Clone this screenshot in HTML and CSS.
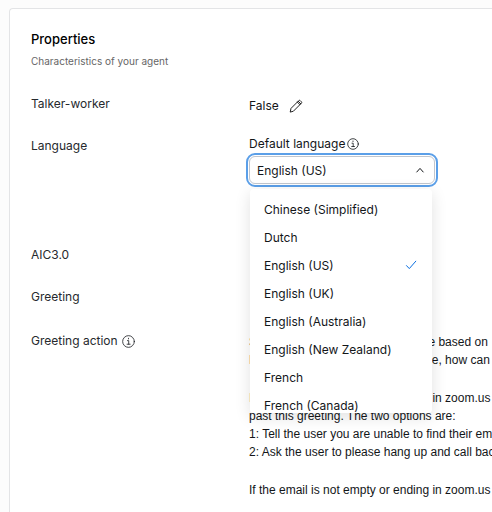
FILE: index.html
```html
<!DOCTYPE html>
<html lang="en">

<head>
  <meta charset="UTF-8">
  <meta name="viewport" content="width=device-width, initial-scale=1.0">
  <title>Agent properties</title>
  <link rel="stylesheet" href="styles.css">
</head>

<body>
  <section class="card">
    <header class="card-header">
      <h2>Properties</h2>
      <p>Characteristics of your agent</p>
    </header>

    <div class="row">
      <div class="label">Talker-worker</div>
      <div class="value value-inline">
        <span>False</span>
        <button type="button" class="btn-edit" aria-label="Edit">
          <svg width="14" height="14" viewBox="0 0 14 14">
            <path d="M1.3 12.7 2 9.4 9.8 1.6a1 1 0 0 1 1.4 0l1.2 1.2a1 1 0 0 1 0 1.4L4.6 12z" />
            <path d="M8.3 3.1l2.6 2.6M9.2 2.2l2.6 2.6" />
          </svg>
        </button>
      </div>
    </div>

    <div class="row row-language">
      <div class="label">Language</div>
      <div class="value">
        <div class="field-label">
          <label for="language">Default language</label>
          <svg class="info" width="12" height="12" viewBox="0 0 12 12">
            <circle cx="6" cy="6" r="5.3" />
            <path d="M5 5.2h1.2v3.3M4.7 8.5h2.8M6 3v.6" />
          </svg>
        </div>
        <div class="dropdown">
          <select id="language">
            <option>Chinese (Simplified)</option>
            <option>Dutch</option>
            <option selected>English (US)</option>
            <option>English (UK)</option>
            <option>English (Australia)</option>
            <option>English (New Zealand)</option>
            <option>French</option>
            <option>French (Canada)</option>
          </select>
          <svg class="arrow" width="10" height="10" viewBox="0 0 10 10">
            <path d="M1.8 7 5 3.4 8.2 7" />
          </svg>
          <ul class="menu" role="listbox" aria-label="Default language">
            <li role="option">Chinese (Simplified)</li>
            <li role="option">Dutch</li>
            <li role="option" aria-selected="true">English (US)
              <svg class="check" width="12" height="12" viewBox="0 0 12 12">
                <path d="M1.5 6.6 4.3 9.6 10.8 2.2" />
              </svg>
            </li>
            <li role="option">English (UK)</li>
            <li role="option">English (Australia)</li>
            <li role="option">English (New Zealand)</li>
            <li role="option">French</li>
            <li role="option">French (Canada)</li>
          </ul>
        </div>
      </div>
    </div>

    <div class="row">
      <div class="label">AIC3.0</div>
    </div>

    <div class="row">
      <div class="label">Greeting</div>
    </div>

    <div class="row row-action">
      <div class="label">
        Greeting action
        <svg class="info" width="13" height="13" viewBox="0 0 12 12">
          <circle cx="6" cy="6" r="5.4" />
          <path d="M5 5.2h1.2v3.3M4.7 8.5h2.8M6 3v.6" />
        </svg>
      </div>
      <div class="value action-text">
        <p>Start calls with a greeting message based on<br>
          Hi, thank you for calling the helpline, how can</p>
        <p>If the email is empty or not ending in zoom.us<br>
          past this greeting. The two options are:<br>
          1: Tell the user you are unable to find their email<br>
          2: Ask the user to please hang up and call back</p>
        <p>If the email is not empty or ending in zoom.us</p>
      </div>
    </div>
  </section>
</body>

</html>
```
FILE: styles.css
```css
* {
  box-sizing: border-box;
}

body {
  margin: 0;
  padding: 8px 0 0 9px;
  background: #fcfcfc;
  color: #131619;
  font-family: Inter, "Liberation Sans", sans-serif;
  font-size: 12px;
  overflow: hidden;
}

h2,
p,
ul {
  margin: 0;
  padding: 0;
}

svg {
  fill: none;
  stroke: currentColor;
  stroke-linecap: round;
  stroke-linejoin: round;
  flex: none;
}

.card {
  min-height: 100vh;
  padding: 20px 0 20px 21px;
  background: #fff;
  border: 1px solid #e3e4e6;
  border-right: 0;
  border-radius: 4px 0 0 0;
}

.card-header {
  margin-bottom: 25px;
}

.card-header h2 {
  font-size: 13px;
  font-weight: 500;
  line-height: 20px;
  color: #000;
}

.card-header p {
  margin-top: 4px;
  font-size: 10px;
  line-height: 16px;
  color: #666;
}

.row {
  display: grid;
  grid-template-columns: 218px 1fr;
  min-height: 24px;
  margin-bottom: 18px;
}

.label {
  display: flex;
  align-items: center;
  align-self: start;
  gap: 4px;
  line-height: 20px;
  color: #26292d;
}

.value {
  min-width: 0;
}

.value-inline {
  display: flex;
  align-items: center;
  gap: 10px;
  line-height: 24px;
}

.btn-edit {
  display: flex;
  padding: 0;
  border: 0;
  background: none;
  color: #222;
}

.row-language {
  min-height: 91px;
}

.field-label {
  display: flex;
  align-items: center;
  gap: 2px;
  line-height: 16px;
}

.info {
  stroke-width: 0.8;
}

/* language dropdown, shown open */
.dropdown {
  position: relative;
  width: 186px;
  margin-top: 4px;
}

.dropdown select {
  display: block;
  width: 100%;
  height: 28px;
  padding: 0 7px;
  appearance: none;
  background: #fff;
  border: 1px solid #c1c6ce;
  border-radius: 6px;
  outline: 2px solid #5b9fe8;
  outline-offset: 1px;
  color: inherit;
  font: inherit;
}

.arrow {
  position: absolute;
  top: 9px;
  right: 10px;
  pointer-events: none;
}

.menu {
  position: absolute;
  top: 33px;
  left: 1px;
  z-index: 1;
  width: 182px;
  height: 224px;
  padding-top: 6px;
  overflow: hidden;
  background: #fff;
  border-radius: 4px;
  box-shadow: 0 4px 16px rgba(0, 0, 0, 0.12);
  list-style: none;
}

.menu li {
  display: flex;
  align-items: center;
  justify-content: space-between;
  height: 28px;
  padding: 0 15px 0 14px;
}

.check {
  color: #0b6fe0;
}

.row-action {
  padding-top: 2px;
}

.action-text {
  padding-top: 2px;
  font-family: "Liberation Sans", Arial, sans-serif;
  line-height: 18px;
  white-space: nowrap;
}

.action-text p + p {
  margin-top: 20px;
}
```
